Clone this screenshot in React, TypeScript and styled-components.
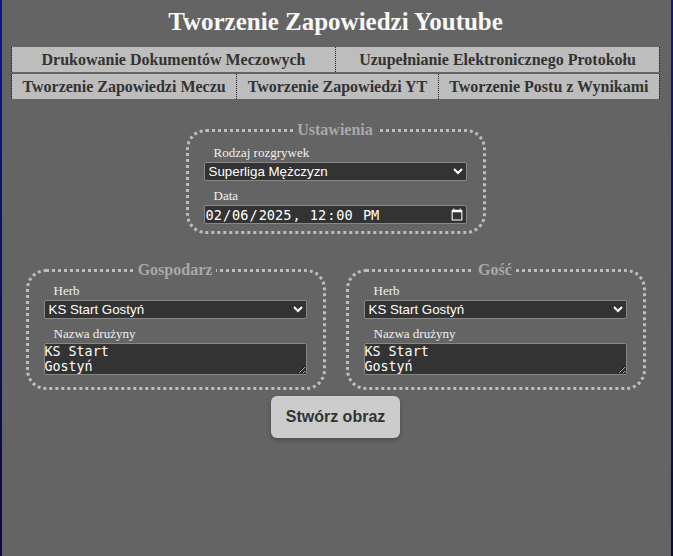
import React from "react";
import styled, { createGlobalStyle } from "styled-components";

const Global = createGlobalStyle`
  html {
    background: linear-gradient(#14148a, #0a0a40);
    min-height: 100%;
  }
  body {
    margin: 0 2px;
    min-height: 100vh;
    background: #646464;
    font-family: "Liberation Serif", serif;
  }
`;

const Page = styled.div`
  display: flex;
  flex-direction: column;
  align-items: center;
  padding: 0 11px 0 9px;
`;

const Title = styled.h1`
  margin: 8px 0 11px;
  font-size: 25px;
  line-height: 28px;
  color: #f8f8f8;
  font-weight: bold;
`;

const Nav = styled.nav`
  align-self: stretch;
  display: flex;
  flex-direction: column;
  gap: 2px;
`;

const TabRow = styled.div<{ $equal?: boolean }>`
  display: flex;
  border-left: 1px dotted #222;
  border-right: 1px dotted #222;
  & > button {
    flex: ${(p) => (p.$equal ? "1 1 0" : "1 1 auto")};
  }
`;

const Tab = styled.button`
  height: 25px;
  padding: 0 6px;
  border: none;
  background: #bdbdbd;
  color: #333;
  font-family: "Liberation Serif", serif;
  font-weight: bold;
  font-size: 16px;
  cursor: pointer;
  & + & {
    border-left: 1px dotted #222;
  }
`;

const Fieldset = styled.fieldset<{ $lead: number; $tail: number }>`
  width: 300px;
  box-sizing: border-box;
  margin: 0;
  padding: 0 16px ${(p) => p.$tail}px 15px;
  border: 3px dotted #bdbdbd;
  border-radius: 20px;
  display: flex;
  flex-direction: column;
  & > label:first-of-type {
    margin-top: ${(p) => p.$lead}px;
  }
`;

const Legend = styled.legend`
  margin: 0 auto;
  padding: 0 4px;
  color: #a9a9a9;
  font-weight: bold;
  font-size: 16px;
`;

const Label = styled.label`
  display: block;
  margin: 7px 0 2px 10px;
  font-size: 13px;
  line-height: 15px;
  color: #f0f0f0;
`;

const Select = styled.select`
  height: 19px;
  box-sizing: border-box;
  width: 100%;
  background: #333;
  color: #fff;
  border: 1px solid #888;
  border-radius: 2px;
  font-family: "Liberation Sans", Arial, sans-serif;
  font-size: 13.33px;
  color-scheme: dark;
`;

const DateInput = styled.input`
  height: 19px;
  box-sizing: border-box;
  width: 100%;
  background: #333;
  color: #fff;
  border: 1px solid #888;
  border-radius: 2px;
  padding: 0;
  font-family: "DejaVu Sans Mono", monospace;
  font-size: 13.6px;
  color-scheme: dark;
`;

const TextArea = styled.textarea`
  height: 32px;
  box-sizing: border-box;
  width: 100%;
  margin: 0;
  background: #333;
  color: #fff;
  border: 1px solid #888;
  border-radius: 2px;
  padding: 0;
  font-family: "DejaVu Sans Mono", monospace;
  font-size: 13.33px;
  line-height: 15px;
  color-scheme: dark;
`;

const Settings = styled.div`
  margin-top: 22px;
`;

const Teams = styled.div`
  display: flex;
  gap: 20px;
  margin-top: 27px;
`;

const Button = styled.button`
  margin-top: 6px;
  height: 42px;
  padding: 0 15px;
  background: #cccccc;
  color: #333;
  border: none;
  border-radius: 6px;
  box-shadow: 0 2px 4px rgba(0, 0, 0, 0.25);
  font-family: "Liberation Sans", Arial, sans-serif;
  font-weight: bold;
  font-size: 16px;
`;

const teams = ["KS Start Gostyń"];

function TeamBox({ title }: { title: string }) {
  return (
    <Fieldset $lead={4} $tail={12}>
      <Legend>{title}</Legend>
      <Label>Herb</Label>
      <Select defaultValue={teams[0]}>
        {teams.map((t) => (
          <option key={t}>{t}</option>
        ))}
      </Select>
      <Label>Nazwa drużyny</Label>
      <TextArea defaultValue={"KS Start\nGostyń"} />
    </Fieldset>
  );
}

export default function App() {
  return (
    <Page>
      <Global />
      <Title>Tworzenie Zapowiedzi Youtube</Title>
      <Nav>
        <TabRow $equal>
          <Tab>Drukowanie Dokumentów Meczowych</Tab>
          <Tab>Uzupełnianie Elektronicznego Protokołu</Tab>
        </TabRow>
        <TabRow>
          <Tab>Tworzenie Zapowiedzi Meczu</Tab>
          <Tab>Tworzenie Zapowiedzi YT</Tab>
          <Tab>Tworzenie Postu z Wynikami</Tab>
        </TabRow>
      </Nav>
      <Settings>
        <Fieldset $lead={6} $tail={7}>
          <Legend>Ustawienia</Legend>
          <Label>Rodzaj rozgrywek</Label>
          <Select defaultValue="Superliga Mężczyzn">
            <option>Superliga Mężczyzn</option>
          </Select>
          <Label>Data</Label>
          <DateInput type="datetime-local" defaultValue="2025-02-06T12:00" />
        </Fieldset>
      </Settings>
      <Teams>
        <TeamBox title="Gospodarz" />
        <TeamBox title="Gość" />
      </Teams>
      <Button>Stwórz obraz</Button>
    </Page>
  );
}
